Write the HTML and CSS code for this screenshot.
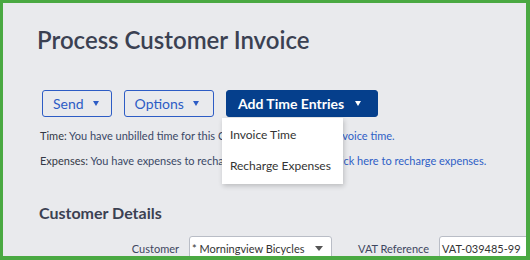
FILE: index.html
```html
<!DOCTYPE html>
<html lang="en">
<head>
  <meta charset="UTF-8">
  <title>Process Customer Invoice</title>
  <link rel="stylesheet" href="styles.css">
</head>
<body>

<div class="frame">
  <div class="content">
    <h1>Process Customer Invoice</h1>

    <!-- action buttons -->
    <div class="toolbar">
      <button class="btn">Send <span class="caret"></span></button>
      <button class="btn options">Options <span class="caret"></span></button>
      <div class="menu-wrap">
        <button class="btn primary">Add Time Entries <span class="caret"></span></button>
        <ul class="menu">
          <li>Invoice Time</li>
          <li>Recharge Expenses</li>
        </ul>
      </div>
    </div>

    <p class="note"><b>Time:</b> You have unbilled time for this Customer. <a href="#">Click here to invoice time.</a></p>
    <p class="note"><b>Expenses:</b> You have expenses to recharge for this Customer. <a href="#">Click here to recharge expenses.</a></p>

    <h2>Customer Details</h2>

    <div class="field-row">
      <label class="field-label first">Customer</label>
      <div class="select">* Morningview Bicycles <span class="select-caret"></span></div>
      <label class="field-label second">VAT Reference</label>
      <div class="input">VAT-039485-99</div>
    </div>
  </div>
</div>

</body>
</html>
```

FILE: styles.css
```css
body {
  margin: 0;
  padding: 0;
  font-family: "Lato", "Liberation Sans", sans-serif;
  color: #3b4152;
}

.frame {
  width: 530px;
  height: 260px;
  box-sizing: border-box;
  border: 3px solid #4aa942;
  border-right-width: 4px;
  border-bottom-width: 4px;
  background-color: #e9eaed;
  overflow: hidden;
}

.content {
  padding-left: 37px;
}

h1 {
  margin: 22px 0 0 -3px;
  font-size: 24px;
  line-height: 30px;
  font-weight: 600;
  color: #3b4152;
}

.toolbar {
  display: flex;
  gap: 12px;
  margin: 35px 0 0 2px;
}

.btn {
  display: flex;
  align-items: center;
  height: 27px;
  padding: 0 12px 0 10px;
  border: 1px solid #2d5cc5;
  border-radius: 3px;
  background-color: transparent;
  color: #2d5cc5;
  font-family: inherit;
  font-size: 14px;
}

.btn.options {
  padding-right: 14px;
}

.btn.primary {
  padding: 0 16px 0 11px;
  background-color: #053f8c;
  border-color: #053f8c;
  color: #fff;
  font-weight: bold;
}

.caret {
  display: inline-block;
  margin-left: 9px;
  border-left: 3px solid transparent;
  border-right: 3px solid transparent;
  border-top: 5px solid currentColor;
}

.btn.primary .caret {
  margin-left: 11px;
}

.menu-wrap {
  position: relative;
}

.menu {
  position: absolute;
  top: 28px;
  left: -4px;
  width: 121px;
  margin: 0;
  padding: 1px 0 3px;
  list-style: none;
  background-color: #fff;
  box-shadow: 1px 2px 5px rgba(0, 0, 0, 0.2);
  z-index: 2;
}

.menu li {
  padding: 0 8px;
  font-size: 12px;
  line-height: 31px;
  color: #333;
  white-space: nowrap;
}

.note {
  margin: 11px 0 0;
  font-size: 11px;
  line-height: 15px;
  color: #3a4866;
  white-space: nowrap;
}

.note + .note {
  margin-top: 10px;
}

.note b {
  font-weight: normal;
  color: #333845;
}

.note a {
  color: #2f5fc6;
  text-decoration: none;
}

h2 {
  margin: 35px 0 0 -1px;
  font-size: 16px;
  line-height: 20px;
  font-weight: bold;
  color: #3b4152;
}

.field-row {
  display: flex;
  align-items: center;
  margin-top: 13px;
}

.field-label {
  flex-shrink: 0;
  box-sizing: border-box;
  padding-right: 10px;
  text-align: right;
  font-size: 11px;
  color: #3d4660;
}

.field-label.first {
  width: 149px;
}

.field-label.second {
  width: 107px;
}

.select, .input {
  flex-shrink: 0;
  box-sizing: border-box;
  height: 24px;
  padding: 5px 2px 0;
  background-color: #fff;
  border: 1px solid #b9bdc6;
  border-radius: 3px;
  font-size: 11px;
  color: #333;
  white-space: nowrap;
}

.select {
  display: flex;
  justify-content: space-between;
  width: 143px;
}

.select-caret {
  display: inline-block;
  margin: 4px 6px 0 0;
  border-left: 4px solid transparent;
  border-right: 4px solid transparent;
  border-top: 5px solid #555;
}

.input {
  width: 100px;
}
```
